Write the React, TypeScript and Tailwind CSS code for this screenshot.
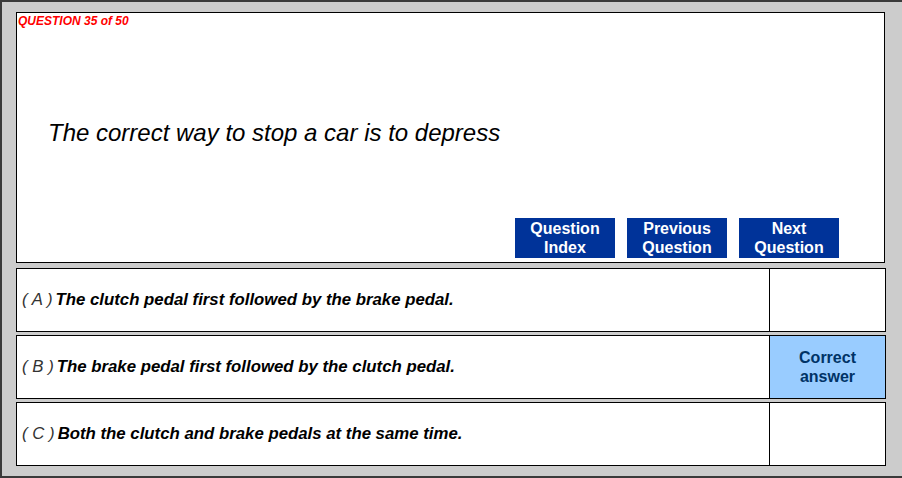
const answers = [
  { letter: 'A', text: 'The clutch pedal first followed by the brake pedal.', correct: false },
  { letter: 'B', text: 'The brake pedal first followed by the clutch pedal.', correct: true },
  { letter: 'C', text: 'Both the clutch and brake pedals at the same time.', correct: false },
];

function NavButton({ top, bottom }: { top: string; bottom: string }) {
  return (
    <button className="w-[100px] h-[40px] bg-[#003399] text-white font-bold text-[16px] leading-[19px] flex flex-col items-center justify-center">
      <span>{top}</span>
      <span>{bottom}</span>
    </button>
  );
}

export default function App() {
  return (
    <div
      className="w-[902px] h-[478px] bg-[#cccccc] border-l-2 border-t-2 border-b-2 border-[#3a3a3a] pt-[10px] pl-[14px]"
      style={{ fontFamily: '"Liberation Sans", Arial, sans-serif' }}
    >
      <div className="w-[869px] h-[251px] bg-white border border-black flex flex-col">
        <div className="pl-[1px] pt-[1px] text-[12px] leading-[14px] font-bold italic text-[#ff0000]">
          QUESTION 35 of 50
        </div>
        <div className="pl-[31px] pt-[91px] text-[24px] leading-[28px] italic text-black">
          The correct way to stop a car is to depress
        </div>
        <div className="flex gap-[12px] pl-[498px] mt-auto pb-[4px]">
          <NavButton top="Question" bottom="Index" />
          <NavButton top="Previous" bottom="Question" />
          <NavButton top="Next" bottom="Question" />
        </div>
      </div>
      <div className="flex flex-col gap-[3px] mt-[5px]">
        {answers.map((a) => (
          <div key={a.letter} className="w-[870px] h-[64px] bg-white border border-black flex">
            <div className="flex-1 flex items-center pl-[5px] text-[16.8px] italic text-black">
              <span className="font-normal text-[#333] mr-[3px]">( {a.letter} )</span>
              <span className="font-bold">{a.text}</span>
            </div>
            <div
              className={`w-[116px] border-l border-black flex flex-col items-center justify-center text-[16px] leading-[19px] font-bold text-[#003366] ${
                a.correct ? 'bg-[#99ccff]' : 'bg-white'
              }`}
            >
              {a.correct && (
                <>
                  <span>Correct</span>
                  <span>answer</span>
                </>
              )}
            </div>
          </div>
        ))}
      </div>
    </div>
  );
}
